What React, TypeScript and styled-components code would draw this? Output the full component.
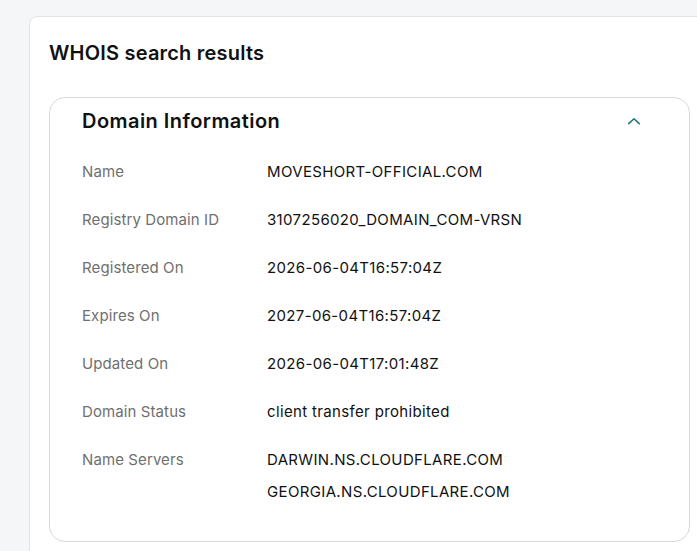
import React from 'react';
import styled, { createGlobalStyle } from 'styled-components';

const GlobalStyle = createGlobalStyle`
  html, body {
    margin: 0;
    padding: 0;
    background: #f5f6f7;
    overflow: hidden;
  }
  body {
    font-family: Inter, "Noto Sans", "Liberation Sans", sans-serif;
    color: #111111;
  }
`;

const Page = styled.div`
  padding: 16px 0 0 29px;
  height: 551px;
  box-sizing: border-box;
  overflow: hidden;
`;

const ResultsCard = styled.section`
  width: 681px;
  min-height: 600px;
  box-sizing: border-box;
  background: #ffffff;
  border: 1px solid #e2e3e4;
  border-radius: 8px;
  padding: 22px 19px 0 19px;
`;

const PageTitle = styled.h1`
  margin: 0 0 30px;
  font-size: 20px;
  line-height: 28px;
  font-weight: 600;
  letter-spacing: 0.2px;
  color: #111111;
`;

const InfoCard = styled.div`
  border: 1px solid #d8d9da;
  border-radius: 16px;
  padding: 0 0 33px;
  background: #ffffff;
`;

const InfoHeader = styled.div`
  display: flex;
  align-items: center;
  justify-content: space-between;
  height: 46px;
  padding: 0 43px 0 32px;
  margin-bottom: 12px;
`;

const InfoTitle = styled.h2`
  margin: 0;
  font-size: 20px;
  font-weight: 600;
  letter-spacing: 0.45px;
  color: #111111;
`;

const Toggle = styled.button`
  display: flex;
  align-items: center;
  justify-content: center;
  width: 24px;
  height: 24px;
  padding: 0;
  border: none;
  background: none;
  color: #1f7b7b;
  cursor: pointer;
`;

const Rows = styled.dl`
  margin: 0;
  padding: 0 32px;
  display: flex;
  flex-direction: column;
  gap: 16px;
`;

const Row = styled.div`
  display: grid;
  grid-template-columns: 185px 1fr;
  font-size: 15px;
  line-height: 32px;
`;

const Label = styled.dt`
  margin: 0;
  color: #6f6f6f;
  letter-spacing: 0.1px;
`;

const Value = styled.dd`
  margin: 0;
  color: #111111;
  letter-spacing: 0.35px;
`;

const rows: { label: string; values: string[] }[] = [
  { label: 'Name', values: ['MOVESHORT-OFFICIAL.COM'] },
  { label: 'Registry Domain ID', values: ['3107256020_DOMAIN_COM-VRSN'] },
  { label: 'Registered On', values: ['2026-06-04T16:57:04Z'] },
  { label: 'Expires On', values: ['2027-06-04T16:57:04Z'] },
  { label: 'Updated On', values: ['2026-06-04T17:01:48Z'] },
  { label: 'Domain Status', values: ['client transfer prohibited'] },
  { label: 'Name Servers', values: ['DARWIN.NS.CLOUDFLARE.COM', 'GEORGIA.NS.CLOUDFLARE.COM'] },
];

const App: React.FC = () => (
  <>
    <GlobalStyle />
    <Page>
      <ResultsCard>
        <PageTitle>WHOIS search results</PageTitle>
        <InfoCard>
          <InfoHeader>
            <InfoTitle>Domain Information</InfoTitle>
            <Toggle aria-label="Collapse">
              <svg width="18" height="18" viewBox="0 0 24 24" fill="none" stroke="currentColor" strokeWidth="2.2" strokeLinecap="round" strokeLinejoin="round">
                <path d="M5 15.5l7-6.5 7 6.5" />
              </svg>
            </Toggle>
          </InfoHeader>
          <Rows>
            {rows.map((row) => (
              <Row key={row.label}>
                <Label>{row.label}</Label>
                <Value>
                  {row.values.map((v) => (
                    <div key={v}>{v}</div>
                  ))}
                </Value>
              </Row>
            ))}
          </Rows>
        </InfoCard>
      </ResultsCard>
    </Page>
  </>
);

export default App;
